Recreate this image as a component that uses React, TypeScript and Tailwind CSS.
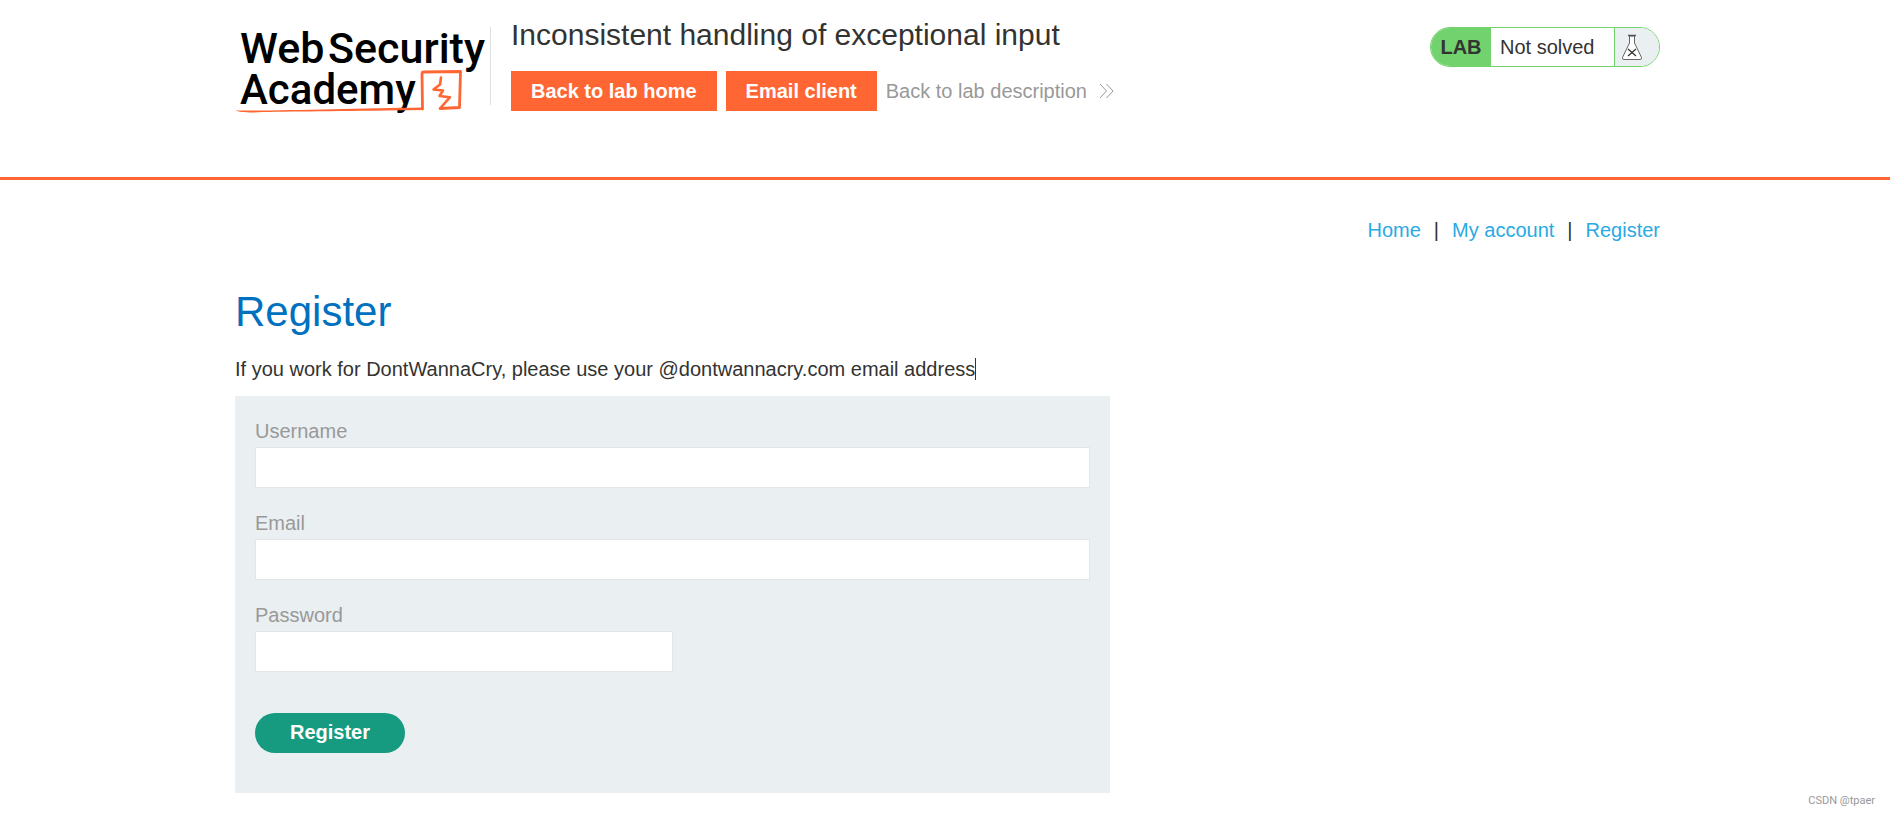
import React from "react";

function AcademyLogo() {
  return (
    <svg viewBox="0 0 250 96" className="h-24 w-[250px] shrink-0" role="img" aria-label="Web Security Academy">
      <text fill="#000" fontFamily="Roboto, sans-serif" fontWeight="500" fontSize="43">
        <tspan x="5" y="43">Web</tspan>
        <tspan x="93" y="43">Security</tspan>
        <tspan x="5" y="84" fontSize="42">Academy</tspan>
      </text>
      <g fill="none" stroke="#ff6633" strokeLinejoin="round" strokeLinecap="round">
        <path d="M187.500 89 L187 53.500 Q187 52 189 52 L225.500 51.500 L224.500 87.500 L205 88.500" strokeWidth="2.800" />
        <path d="M206 57.500 L205 64.500 L198.500 69.500 L208 70.500 L204.500 76 L215 77.200 L205.500 88" strokeWidth="2.600" />
      </g>
      <path d="M0.500 90.500 C40 91 120 88.500 188 87.500 L188 90 C120 91 60 91.500 28 92 C18 93 4 92.500 0.500 90.500Z" fill="#ff6633" />
    </svg>
  );
}

function FlaskIcon() {
  return (
    <svg viewBox="0 0 22 27" className="h-[27px] w-[22px]" aria-hidden="true">
      <path d="M8.500 2 V9 L1.500 23.500 Q1 25.500 3 25.500 H19 Q21 25.500 20.500 23.500 L13.500 9 V2Z" fill="#fff" stroke="#666" strokeWidth="1" />
      <path d="M7 1.500 H15" stroke="#555" strokeWidth="1.500" />
      <path d="M7 15 L15 22 M15 15 L7 22" stroke="#333" strokeWidth="1.300" />
    </svg>
  );
}

function Field({ id, label, type, width }: { id: string; label: string; type: string; width: string }) {
  return (
    <div className="flex flex-col">
      <label htmlFor={id} className="mb-px leading-[30px] text-[#999999]">{label}</label>
      <input id={id} name={id} type={type} className={`h-[41px] border border-[#e5e5e5] bg-white px-2 outline-none ${width}`} />
    </div>
  );
}

const action = "flex h-10 items-center bg-[#ff6633] px-5 font-bold text-white";
const navLink = "text-[#29aae3]";

export default function App() {
  return (
    <div className="relative min-h-screen bg-white text-[20px] leading-[30px] text-[#333332] [font-family:'Liberation_Sans',Arial,sans-serif]">
      <header className="border-b-[3px] border-[#ff6633]">
        <div className="mx-auto flex h-[177px] max-w-[1430px] items-start pl-[5px]">
          <div className="mt-5">
            <AcademyLogo />
          </div>
          <div className="mt-[27px] ml-[5px] h-[78px] w-px bg-[#e0e0e0]" />
          <div className="ml-5 pt-4">
            <h2 className="text-[30px] leading-[38px]">Inconsistent handling of exceptional input</h2>
            <div className="mt-[17px] flex items-center gap-[9px]">
              <a href="#home" className={action}>Back to lab home</a>
              <a href="#email" className={action}>Email client</a>
              <a href="#description" className="flex items-center gap-3 text-[#999999]">
                Back to lab description
                <svg viewBox="0 0 15 16" className="h-4 w-[15px]" fill="none" stroke="#999" strokeWidth="1" aria-hidden="true">
                  <path d="M1 1 L7.500 8 L1 15 M7.500 1 L14 8 L7.500 15" />
                </svg>
              </a>
            </div>
          </div>
          <div className="mt-[27px] ml-auto flex h-10 w-[230px] overflow-hidden rounded-full border border-[#72d26e]">
            <span className="flex w-[60px] items-center justify-center bg-[#72d26e] font-bold">LAB</span>
            <span className="flex flex-1 items-center pl-[9px]">Not solved</span>
            <span className="flex w-[45px] items-center border-l border-[#72d26e] bg-[#eaeff2] pl-[6px]">
              <FlaskIcon />
            </span>
          </div>
        </div>
      </header>

      <main className="mx-auto max-w-[1430px] pl-[5px]">
        <nav className="flex justify-end gap-[13px] pt-[35px]">
          <a href="#home" className={navLink}>Home</a>
          <span>|</span>
          <a href="#account" className={navLink}>My account</a>
          <span>|</span>
          <a href="#register" className={navLink}>Register</a>
        </nav>

        <h1 className="mt-[41px] text-[42px] leading-[52px] text-[#0071bf]">Register</h1>
        <p className="mt-4 flex items-center">
          If you work for DontWannaCry, please use your @dontwannacry.com email address
          <span className="h-[22px] w-px bg-[#333332]" />
        </p>

        <form className="mt-3 flex max-w-[875px] flex-col gap-5 bg-[#eaeff2] px-5 pt-5 pb-10" onSubmit={(e) => e.preventDefault()}>
          <Field id="username" label="Username" type="text" width="w-full" />
          <Field id="email" label="Email" type="email" width="w-full" />
          <Field id="password" label="Password" type="password" width="w-1/2" />
          <button type="submit" className="mt-[21px] h-10 w-[150px] rounded-full bg-[#169b80] pb-[2px] font-bold text-white">Register</button>
        </form>
      </main>

      <footer className="absolute right-[15px] bottom-[7px] text-[11px] leading-4 text-[#999999] [font-family:Roboto,sans-serif]">CSDN @tpaer</footer>
    </div>
  );
}
